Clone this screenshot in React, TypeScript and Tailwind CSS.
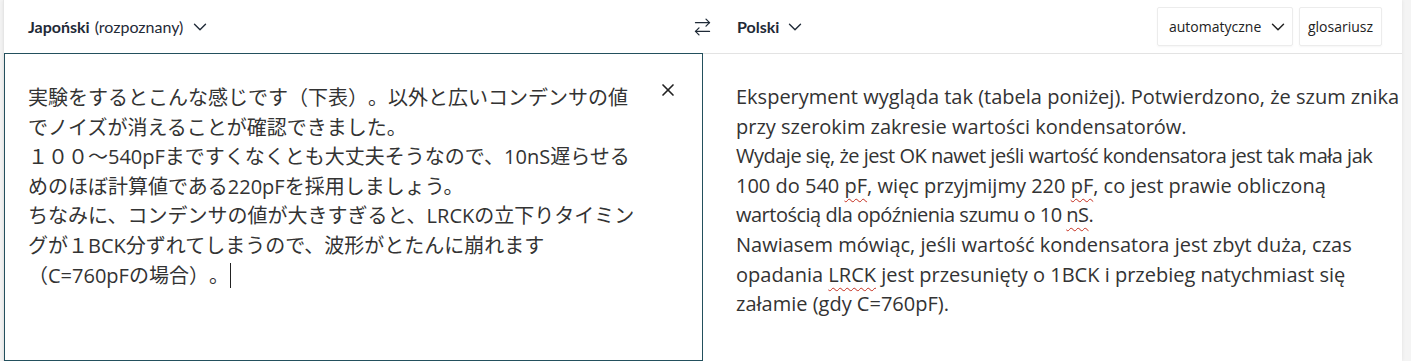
import React from "react";
import { ArrowRightLeft, ChevronDown, X } from "lucide-react";

const jp = [
  "実験をするとこんな感じです（下表）。以外と広いコンデンサの値",
  "でノイズが消えることが確認できました。",
  "１００～540pFまですくなくとも大丈夫そうなので、10nS遅らせる",
  "めのほぼ計算値である220pFを採用しましょう。",
  "ちなみに、コンデンサの値が大きすぎると、LRCKの立下りタイミン",
  "グが１BCK分ずれてしまうので、波形がとたんに崩れます",
];

function Sq({ children }: { children: React.ReactNode }) {
  return (
    <span className="underline decoration-wavy decoration-[#c42b1c] decoration-1 underline-offset-[5px]">
      {children}
    </span>
  );
}

export default function App() {
  return (
    <div className="w-[1411px] h-[361px] overflow-hidden bg-[#f4f4f4] pl-[3px]">
      <div
        className="w-[1399px] h-[361px] bg-white border-l border-[#e6e6e6] shadow-[0_0_4px_rgba(0,0,0,0.08)] flex flex-col text-[#2b2b2b]"
        style={{ fontFamily: "'Open Sans', 'Noto Sans CJK JP', sans-serif" }}
      >
        {/* header */}
        <div className="h-[53px] flex items-stretch shrink-0">
          <div className="w-[699px] shrink-0 flex items-center pl-[24px] text-[16px] text-[#1f2a37]" style={{ fontFamily: "Lato, 'Open Sans', sans-serif" }}>
            <span className="font-bold">Japoński</span>
            <span className="ml-[5px]">(rozpoznany)</span>
            <ChevronDown className="ml-[6px] w-[22px] h-[22px]" strokeWidth={1.5} />
          </div>
          <div className="flex-1 min-w-0 flex items-center relative">
            <ArrowRightLeft className="absolute left-[-11px] top-1/2 -translate-y-1/2 w-[21px] h-[21px] text-[#1f2a37]" strokeWidth={1.5} />
            <div className="flex items-center pl-[34px] text-[16px] text-[#1f2a37]" style={{ fontFamily: "Lato, 'Open Sans', sans-serif" }}>
              <span className="font-bold">Polski</span>
              <ChevronDown className="ml-[5px] w-[22px] h-[22px]" strokeWidth={1.5} />
            </div>
            <div className="ml-auto mr-[20px] flex gap-[6px] text-[14px] text-[#222]">
              <div className="h-[39px] w-[136px] border border-[#ececec] rounded-[2px] flex items-center pl-[11px] shadow-[0_1px_2px_rgba(0,0,0,0.04)]">
                automatyczne
                <ChevronDown className="ml-[6px] w-[22px] h-[22px]" strokeWidth={1.6} />
              </div>
              <div className="h-[39px] w-[83px] border border-[#ececec] rounded-[2px] flex items-center justify-center shadow-[0_1px_2px_rgba(0,0,0,0.04)]">
                glosariusz
              </div>
            </div>
          </div>
        </div>
        {/* body */}
        <div className="flex flex-1 min-h-0">
          <div className="w-[699px] shrink-0 border border-[#23505d] relative pl-[23px] pt-[29px] text-[20px] leading-[29.6px] text-[#333] [text-spacing-trim:space-all]">
            <X className="absolute left-[653px] top-[26px] w-[20px] h-[20px] text-[#222]" strokeWidth={2} />
            {jp.map((l, i) => (
              <div key={i} className="whitespace-nowrap">{l}</div>
            ))}
            <div className="whitespace-nowrap flex items-center">
              <span>（C=760pFの場合）。</span>
              <span className="inline-block w-px h-[25px] bg-[#222] ml-[1px]" />
            </div>
          </div>
          <div className="flex-1 min-w-0 border-t border-[#e3e3e3] pl-[33px] pt-[28px] text-[20px] leading-[29.6px] text-[#333]">
            <div className="whitespace-nowrap">Eksperyment wygląda tak (tabela poniżej). Potwierdzono, że szum znika</div>
            <div className="whitespace-nowrap">przy szerokim zakresie wartości kondensatorów.</div>
            <div className="whitespace-nowrap tracking-[-0.5px]">Wydaje się, że jest OK nawet jeśli wartość kondensatora jest tak mała jak</div>
            <div className="whitespace-nowrap">100 do 540 <Sq>pF</Sq>, więc przyjmijmy 220 <Sq>pF</Sq>, co jest prawie obliczoną</div>
            <div className="whitespace-nowrap tracking-[-0.5px]">wartością dla opóźnienia szumu o 10 <Sq>nS</Sq>.</div>
            <div className="whitespace-nowrap">Nawiasem mówiąc, jeśli wartość kondensatora jest zbyt duża, czas</div>
            <div className="whitespace-nowrap">opadania <Sq>LRCK</Sq> jest przesunięty o 1BCK i przebieg natychmiast się</div>
            <div className="whitespace-nowrap">załamie (gdy C=760pF).</div>
          </div>
        </div>
      </div>
    </div>
  );
}
